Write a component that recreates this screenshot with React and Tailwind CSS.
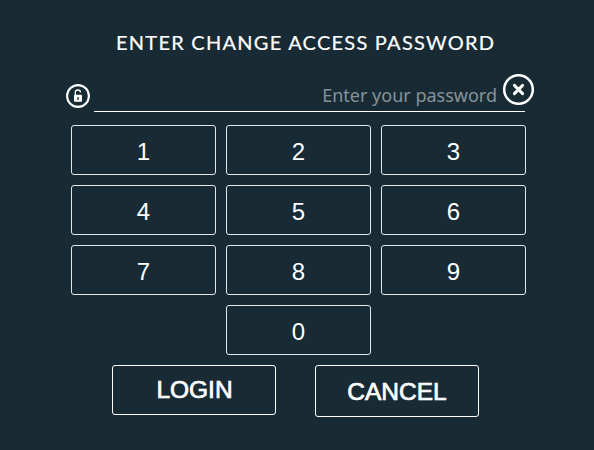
const digits = ['1', '2', '3', '4', '5', '6', '7', '8', '9', '0'];

function Key({ digit }) {
  return (
    <button
      className={`h-[50px] w-[145px] rounded-[3px] border border-[#e4e7e8] pt-[3px] text-center font-['Liberation_Sans',sans-serif] text-2xl leading-none text-white ${
        digit === '0' ? 'col-start-2' : ''
      }`}
    >
      {digit}
    </button>
  );
}

function LockIcon() {
  return (
    <svg width="24" height="24" viewBox="0 0 24 24" fill="none" className="mt-[9px] shrink-0">
      <circle cx="12" cy="12" r="10.9" stroke="white" strokeWidth="2.1" />
      <path d="M9.3 11V8.8a2.6 2.6 0 0 1 5.2-.4" stroke="white" strokeWidth="1.3" />
      <rect x="8" y="10.8" width="8" height="7" rx="0.7" fill="white" />
      <path d="M12 13v3" stroke="#182b35" strokeWidth="1.3" />
    </svg>
  );
}

function ClearIcon() {
  return (
    <svg width="32" height="32" viewBox="0 0 32 32" fill="none">
      <circle cx="16.5" cy="15.5" r="14.3" stroke="white" strokeWidth="2.5" />
      <path d="M12.4 11.4l8.2 8.2m0-8.2l-8.2 8.2" stroke="white" strokeWidth="2.9" strokeLinecap="round" />
    </svg>
  );
}

export default function App() {
  return (
    <main className="h-[450px] w-[594px] overflow-hidden bg-[#182b35] text-white">
      <h1 className="flex h-[75px] items-start pt-[30px] pl-[116px] font-['Lato',sans-serif] text-[20px] leading-6 tracking-[1.25px] whitespace-nowrap [-webkit-text-stroke:0.2px_white]">
        ENTER CHANGE ACCESS PASSWORD
      </h1>

      <div className="relative ml-[66px] flex h-[50px] w-[470px] gap-1">
        <LockIcon />
        <div className="flex h-[37px] w-[431px] justify-end border-b border-white pt-[8px] pr-[28px] font-['Noto_Sans',sans-serif] text-[18px] leading-6 whitespace-nowrap text-[#879298]">
          Enter your password
        </div>
        <button className="absolute top-[-1px] left-[436px]" aria-label="Clear">
          <ClearIcon />
        </button>
      </div>

      <div className="ml-[71px] grid w-[455px] grid-cols-3 gap-[10px]">
        {digits.map((digit) => (
          <Key key={digit} digit={digit} />
        ))}
      </div>

      <div className="mt-[10px] ml-[112px] flex items-start gap-[39px] font-['Liberation_Sans',sans-serif] text-[24.5px] leading-none [-webkit-text-stroke:0.7px_white]">
        <button className="h-[50px] w-[164px] rounded-[3px] border border-white pl-[1px]">LOGIN</button>
        <button className="h-[52px] w-[164px] rounded-[3px] border border-white pt-[2px]">CANCEL</button>
      </div>
    </main>
  );
}
